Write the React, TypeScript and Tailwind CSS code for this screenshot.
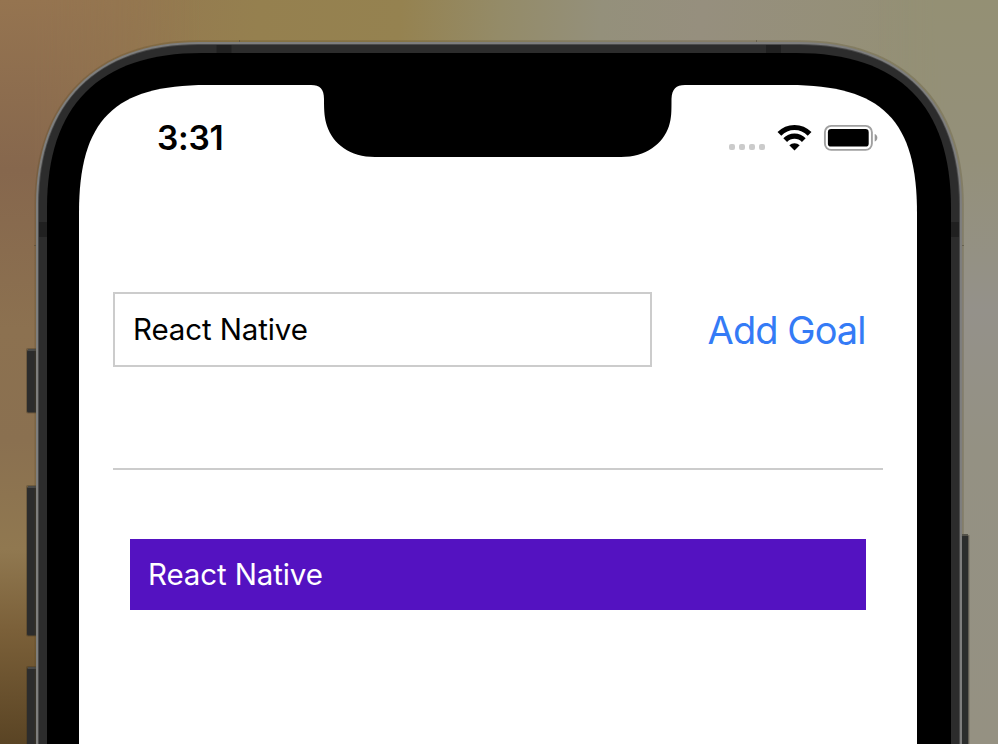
import React from "react";

// Outline of a tall body whose top corners ease from edge to edge.
// len is how far a corner reaches along each edge, k how tightly it turns.
function body(x0: number, y: number, x1: number, len: number, k: number): string {
  return [
    `M${x0} 800V${y + len}`,
    `C${x0} ${y + k} ${x0 + k} ${y} ${x0 + len} ${y}`,
    `H${x1 - len}`,
    `C${x1 - k} ${y} ${x1} ${y + k} ${x1} ${y + len}`,
    "V800Z",
  ].join("");
}

function SideButton({ x, y, w, h }: { x: number; y: number; w: number; h: number }) {
  return (
    <g>
      <rect x={x - 1} y={y - 2} width={w + 2} height={h + 3} rx="2" fill="#3a3020" opacity="0.35" />
      <rect x={x} y={y} width={w} height={h} rx="1.5" fill="#2c2c2c" />
      <rect x={x + 1} y={y - 1} width={w - 1} height="2" fill="#4a4a48" />
    </g>
  );
}

function PhoneFrame() {
  return (
    <svg className="absolute inset-0" width="998" height="744" viewBox="0 0 998 744" aria-hidden="true">
      <SideButton x={27} y={350} w={11} h={62.5} />
      <SideButton x={27} y={487} w={11} h={148.5} />
      <SideButton x={27} y={668} w={11} h={100} />
      <path d={body(34.5, 40.3, 963.8, 164, 61)} fill="#50421f" opacity="0.25" />
      <path d={body(36, 42, 962, 163, 60)} fill="#7e7e7d" />
      <path d={body(38, 44, 960, 161, 59)} fill="#4b4b4b" />
      <path d={body(39, 45, 959, 160, 58)} fill="#2c2c2c" />
      <rect x="962" y="535" width="6.5" height="220" rx="1.5" fill="#2b2d2c" />
      <rect x="962" y="534" width="6" height="2" fill="#55534a" />
      <rect x="968" y="535" width="1.5" height="220" fill="#625d51" opacity="0.6" />
      <rect x="216.5" y="45" width="15" height="8" fill="#202020" />
      <rect x="766" y="45" width="15" height="8" fill="#202020" />
      <rect x="39" y="222" width="8" height="15" fill="#202020" />
      <rect x="951" y="222" width="8" height="15" fill="#202020" />
      <path d="M239.5 40v2M756.5 40v2M34 245.5h2M962 245.5h2" stroke="#4a4334" strokeWidth="0.7" opacity="0.7" />
      <path d={body(47, 53, 951, 155, 52)} fill="#000" />
      <path d={body(79, 85, 917, 128, 35)} fill="#fff" />
      <path
        d="M311 84V85C320 85 324 89 324 99C324 112 324.5 118 327 126C333 144 350 157 375 157H621C646 157 663 144 669 126C671.5 118 671.5 112 671.5 99C672 89 676 85 685 85V84Z"
        fill="#000"
      />
    </svg>
  );
}

function WifiIcon() {
  return (
    <svg width="36" height="28" viewBox="0 0 36 28" aria-hidden="true">
      <g fill="none" stroke="#000">
        <path d="M2.4 9.9A21 21 0 0 1 32.6 9.9" strokeWidth="5.2" />
        <path d="M8.2 16.1A13 13 0 0 1 26.8 16.1" strokeWidth="5.2" />
      </g>
      <path d="M17.500 26.400L12.300 21.200A7.600 7.600 0 0 1 22.700 21.200Z" fill="#000" />
    </svg>
  );
}

function BatteryIcon() {
  return (
    <svg width="55" height="28" viewBox="0 0 55 28" aria-hidden="true">
      <rect x="1.900" y="1.900" width="47" height="24" rx="6.300" fill="none" stroke="#a0a0a0" strokeWidth="1.900" />
      <rect x="4.900" y="5" width="40.800" height="17.600" rx="3.200" fill="#000" />
      <path d="M51.700 10C55.200 11.200 55.200 16.400 51.700 17.600Z" fill="#999" />
    </svg>
  );
}

function StatusBar() {
  return (
    <div className="flex h-[106px] items-center pl-[78px] pr-[39px]">
      <span className="mt-[2px] text-[33.5px] font-semibold leading-none tracking-[-0.3px] text-black">3:31</span>
      <div className="ml-auto flex items-center">
        <div className="mr-[12px] mt-[18px] flex gap-[4px]">
          <i className="size-[6px] rounded-[2px] bg-[#cbcbcb]" />
          <i className="size-[6px] rounded-[2px] bg-[#cbcbcb]" />
          <i className="size-[6px] rounded-[2px] bg-[#cbcbcb]" />
          <i className="size-[6px] rounded-[2px] bg-[#cbcbcb]" />
        </div>
        <WifiIcon />
        <div className="ml-[10px]">
          <BatteryIcon />
        </div>
      </div>
    </div>
  );
}

export default function App() {
  return (
    <div
      className="relative h-[744px] w-[998px] overflow-hidden bg-[linear-gradient(95deg,#937450_0px,#947850_120px,#95804f_260px,#958250_400px,#948b68_500px,#94907b_600px,#968f7e_700px,#949074_960px)] font-['Inter','Liberation_Sans',sans-serif]"
    >
      <div className="absolute inset-y-0 left-0 w-[200px] bg-[linear-gradient(180deg,#957450_0px,#86674d_170px,#8c7150_330px,#8a7050_440px,#907850_550px,#7b6039_630px,#5a4424_744px)] [mask-image:linear-gradient(90deg,#000_30px,transparent_200px)]" />
      <div className="absolute inset-y-0 right-0 w-[120px] bg-[linear-gradient(180deg,#949074_0px,#94907a_160px,#949184_260px,#94918a_310px,#949183_450px,#959182_744px)] [mask-image:linear-gradient(270deg,#000_50px,transparent_120px)]" />
      <PhoneFrame />
      <main className="relative ml-[79px] mt-[85px] w-[838px]">
        <StatusBar />
        <div className="px-[34px] pt-[101px]">
          <form className="flex h-[178px] items-start justify-between border-b-2 border-[#cccccc]">
            <input
              className="h-[75px] w-[539px] border-2 border-[#cccccc] bg-white px-[18px] pb-[2px] text-[29.5px] tracking-[-0.12px] text-black outline-none"
              defaultValue="React Native"
            />
            <button type="button" className="mr-[17.5px] h-[77px] text-[38px] tracking-[-0.95px] text-[#347bf6]">
              Add Goal
            </button>
          </form>
          <ul className="px-[17px] pt-[69px]">
            <li className="flex h-[71px] items-center bg-[#5412c1] pl-[18px] text-[29.5px] tracking-[-0.12px] text-white">
              React Native
            </li>
          </ul>
        </div>
      </main>
    </div>
  );
}
